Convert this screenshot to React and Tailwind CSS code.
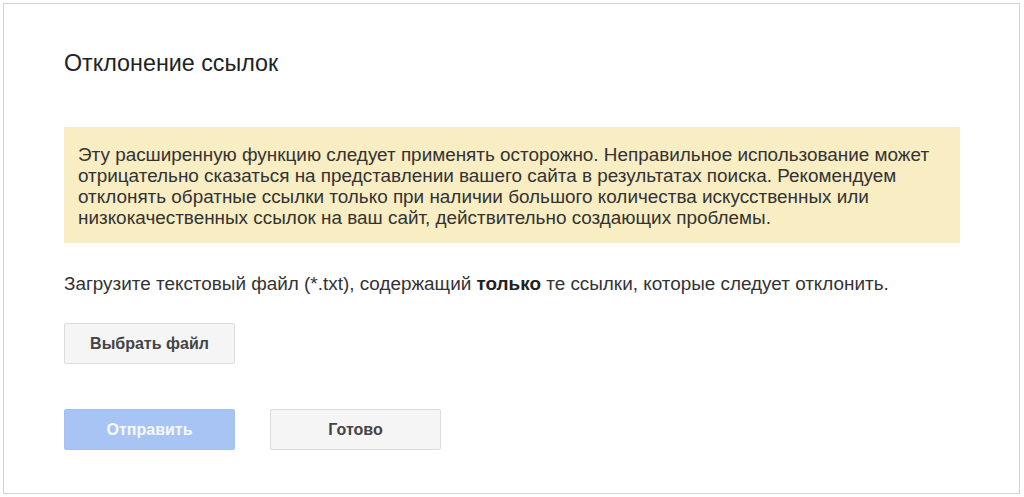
import React from 'react';

const font = { fontFamily: '"Liberation Sans", Arial, sans-serif' };

const App = () => {
  return (
    <div className="w-[1024px] h-[497px] bg-white p-[3px]" style={font}>
      <div className="h-[491px] w-[1017px] border border-[#d4d4d4] bg-white pl-[60px] pt-[45px]">
        <h1 className="text-[23.3px] leading-[28px] text-[#222]">Отклонение ссылок</h1>

        <div className="mt-[50px] w-[896px] bg-[#f8edc3] px-[14px] pt-[17px] pb-[15px] text-[18.9px] leading-[21px] text-[#333]">
          Эту расширенную функцию следует применять осторожно. Неправильное использование может
          отрицательно сказаться на представлении вашего сайта в результатах поиска. Рекомендуем
          отклонять обратные ссылки только при наличии большого количества искусственных или
          низкокачественных ссылок на ваш сайт, действительно создающих проблемы.
        </div>

        <p className="mt-[30px] text-[18.9px] leading-[21px] text-[#333]">
          Загрузите текстовый файл (*.txt), содержащий <b className="font-bold text-[#222]">только</b> те ссылки, которые следует отклонить.
        </p>

        <button className="mt-[29px] flex h-[41px] w-[171px] items-center justify-center rounded-[2px] border border-[#dcdcdc] bg-[#f5f5f5] text-[16px] font-bold text-[#444]">
          Выбрать файл
        </button>

        <div className="mt-[45px] flex gap-[35px]">
          <button className="flex h-[41px] w-[171px] items-center justify-center rounded-[2px] border border-[#a3c0f3] bg-[#a8c4f5] text-[16px] font-bold text-white/90">
            Отправить
          </button>
          <button className="flex h-[41px] w-[171px] items-center justify-center rounded-[2px] border border-[#dcdcdc] bg-[#f5f5f5] text-[16px] font-bold text-[#444]">
            Готово
          </button>
        </div>
      </div>
    </div>
  );
};

export default App;
